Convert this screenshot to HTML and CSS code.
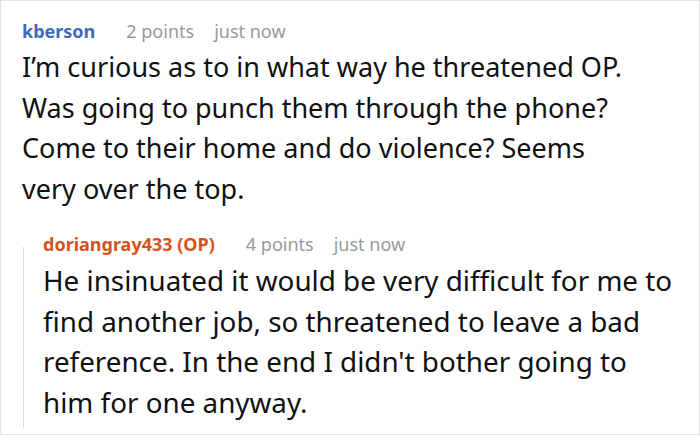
FILE: index.html
```html
<!DOCTYPE html>
<html lang="en">
<head>
<meta charset="utf-8">
<link rel="stylesheet" href="styles.css">
</head>
<body>
<div class="thread">
  <div class="comment">
    <div class="meta">
      <span class="author">kberson</span>
      <span class="points">2 points</span>
      <span class="time">just now</span>
    </div>
    <p class="text">I’m curious as to in what way he threatened OP.<br>Was going to punch them through the phone?<br>Come to their home and do violence? Seems<br>very over the top.</p>
    <div class="reply">
      <div class="meta">
        <span class="author op">doriangray433 (OP)</span>
        <span class="points">4 points</span>
        <span class="time">just now</span>
      </div>
      <p class="text">He insinuated it would be very difficult for me to<br>find another job, so threatened to leave a bad<br>reference. In the end I didn't bother going to<br>him for one anyway.</p>
    </div>
  </div>
</div>
</body>
</html>
```
FILE: styles.css
```css
html, body {
  margin: 0;
  padding: 0;
  background: #ffffff;
}
.thread {
  width: 700px;
  height: 435px;
  box-sizing: border-box;
  border: 1px solid #e3e3e3;
  overflow: hidden;
}
.comment {
  padding: 18px 0 0 21px;
  font-family: "Noto Sans", "Open Sans", sans-serif;
}
.meta {
  display: flex;
  align-items: baseline;
  font-size: 18px;
  line-height: 24px;
}
.author {
  font-weight: 700;
  color: #3b6cb5;
  margin-right: 31px;
}
.author.op {
  color: #d4541c;
}
.points {
  color: #9a9a9a;
  margin-right: 20px;
}
.time {
  color: #9a9a9a;
}
.text {
  margin: 4px 0 0 0;
  font-size: 27px;
  line-height: 40.5px;
  white-space: nowrap;
  color: #111111;
}
.reply {
  position: relative;
  margin: 23px 0 0 1px;
  padding-left: 20px;
}
.reply::before {
  content: "";
  position: absolute;
  left: 0;
  top: 15px;
  bottom: -6px;
  border-left: 1px solid #dedede;
}
.reply .text {
  margin-top: 4px;
  font-size: 27.8px;
}
```
